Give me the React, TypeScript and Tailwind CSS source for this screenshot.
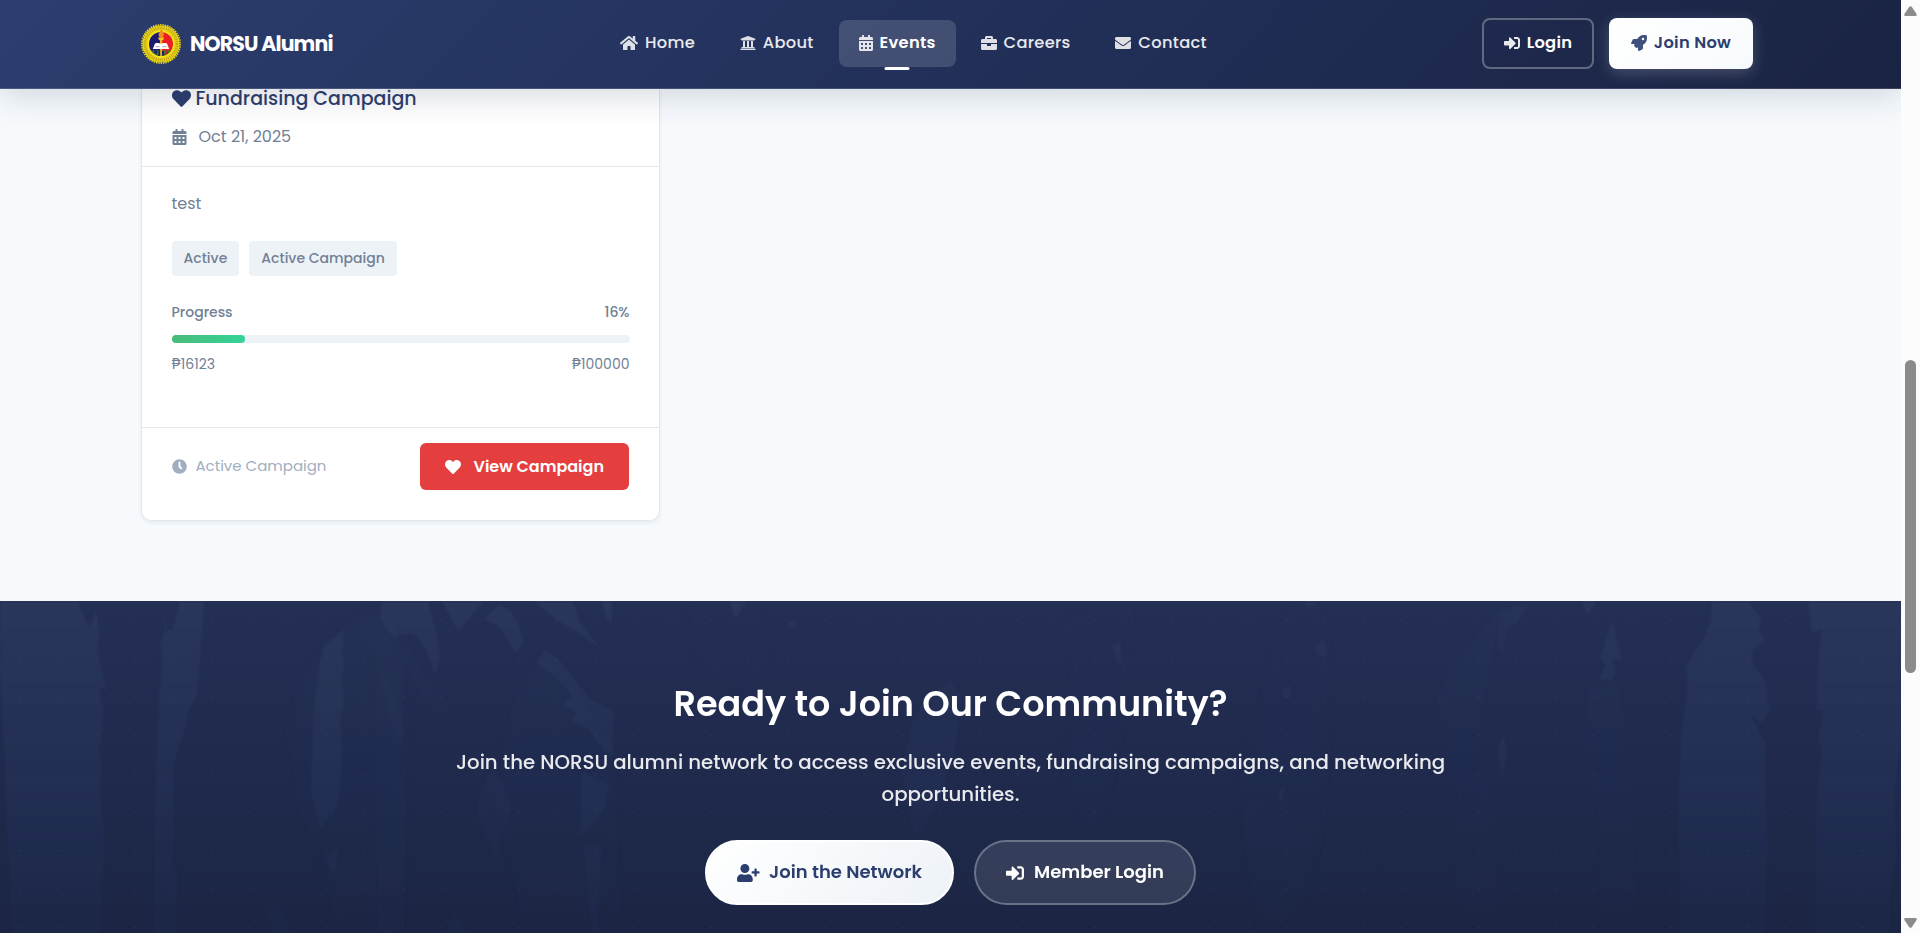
import type { ReactNode } from 'react';
import {
  FaBriefcase,
  FaCalendarAlt,
  FaClock,
  FaEnvelope,
  FaHeart,
  FaHome,
  FaRocket,
  FaSignInAlt,
  FaUniversity,
  FaUserPlus,
} from 'react-icons/fa';

function Seal() {
  return (
    <svg viewBox="0 0 40 40" className="size-10 shrink-0">
      <circle cx="20" cy="20" r="18.6" fill="#ead316" />
      <circle cx="20" cy="20" r="19.2" fill="none" stroke="#f2dc1a" strokeWidth="1.4" strokeDasharray="1.5 0.9" />
      <circle cx="20" cy="20" r="16" fill="none" stroke="#a08c14" strokeWidth="2.8" strokeDasharray="1.1 1" opacity="0.6" />
      <circle cx="20" cy="20" r="13.4" fill="#f8e61c" />
      <path d="M20 8a12 12 0 0 0 0 24z" fill="#1d1a72" />
      <path d="M20 8a12 12 0 0 1 0 24z" fill="#ee1c25" />
      <path d="M10 26.6a12 12 0 0 0 20 0z" fill="#3c7a2a" />
      <path d="M13 27h3v3.2l-3-1.6zM17.5 27h2v5h-2zM21 27h2v4.6h-2z" fill="#20206a" />
      <path d="M24.4 27h2.6v2.4l-2.6 1.6z" fill="#b5262a" />
      <path d="M18.8 14h2.6l-.5 18h-1.6z" fill="#e8b21a" />
      <path d="M20 5.2c2.6 2.6 3.4 4.4 2.6 6.4-.4 1.3-1.3 2-2.5 2.4-1.8-.6-2.7-1.9-2.5-3.7.2-1.5 2-2.6 2.4-5.1z" fill="#f08c1c" />
      <path d="M17 13.6h6.2l-1 2.4h-4.2z" fill="#f6c818" />
      <path d="M14 19.4c2-.8 4.4-.6 6 .3 1.6-.9 4-1.1 6-.3l2.2 5.6H11.8z" fill="#ffffff" />
      <path d="M14.6 22.7h4M21.4 22.7h4" stroke="#8a8a9a" strokeWidth="0.8" />
    </svg>
  );
}

function NavItem({ icon, label, active = false }: { icon: ReactNode; label: string; active?: boolean }) {
  return (
    <a
      className={
        active
          ? 'relative flex h-[47px] items-center gap-[7px] rounded-lg bg-white/15 px-5 text-[16.3px] font-semibold tracking-[0.3px] text-white'
          : 'relative flex h-[47px] items-center gap-[7px] rounded-lg px-5 text-[16.3px] font-medium tracking-[0.3px] text-white/90'
      }
    >
      <span className="text-white/85">{icon}</span>
      <span className="pt-px">{label}</span>
      {active && <span className="absolute top-full left-1/2 h-[3px] w-[25px] -translate-x-1/2 rounded-[2px] bg-white" />}
    </a>
  );
}

function Navbar() {
  return (
    <header className="relative z-10 h-[89px] border-b border-white/15 bg-[linear-gradient(135deg,#2c3e6e_0%,#22305a_50%,#1a2342_100%)] bg-origin-border pr-[148px] pl-[141px] shadow-[0_8px_32px_rgba(26,35,66,0.16)]">
      <div className="grid h-full grid-cols-[459px_1fr_auto] items-center">
        <div className="flex items-center gap-[9px]">
          <Seal />
          <span className="text-[20.5px] font-bold tracking-[-0.85px] text-white">NORSU Alumni</span>
        </div>
        <nav className="mb-[2px] flex items-center gap-[4.8px]">
          <NavItem icon={<FaHome className="h-4 w-[18px]" />} label="Home" />
          <NavItem icon={<FaUniversity className="size-4" />} label="About" />
          <NavItem icon={<FaCalendarAlt className="h-4 w-[14px]" />} label="Events" active />
          <NavItem icon={<FaBriefcase className="size-4" />} label="Careers" />
          <NavItem icon={<FaEnvelope className="size-4" />} label="Contact" />
        </nav>
        <div className="mb-[2px] flex items-center gap-[15px]">
          <a className="flex h-[51px] w-[112px] items-center justify-center gap-[7px] rounded-lg border-2 border-white/30 text-[16.3px] font-semibold tracking-[0.3px] text-white">
            <FaSignInAlt className="size-4 text-white/90" />
            <span className="pt-px">Login</span>
          </a>
          <a className="flex h-[51px] w-[144px] items-center justify-center gap-[7px] rounded-lg bg-[linear-gradient(135deg,#ffffff,#f7fafc)] text-[16.3px] font-semibold tracking-[0.3px] text-[#2c3e6e] shadow-[0_4px_15px_rgba(255,255,255,0.2)]">
            <FaRocket className="size-4 opacity-90" />
            <span className="pt-px">Join Now</span>
          </a>
        </div>
      </div>
    </header>
  );
}

function Tag({ children }: { children: ReactNode }) {
  return (
    <span className="flex h-[35px] items-center rounded bg-[#edf2f7] px-3 text-[14px] font-medium">{children}</span>
  );
}

function CampaignCard() {
  return (
    <article className="h-[432px] w-[519px] rounded-b-[10px] border border-t-0 border-[#e2e8f0] bg-white text-[#718096] shadow-[0_2px_4px_rgba(0,0,0,0.06)]">
      <div className="h-[78px] border-b border-[#e2e8f0] pr-[30px] pl-[29.5px]">
        <h3 className="flex h-[19px] items-center gap-[5px] text-[19px] leading-[19px] font-medium text-[#2c3e6e]">
          <FaHeart className="size-[19px] shrink-0" />
          Fundraising Campaign
        </h3>
        <p className="mt-[17px] flex items-center gap-3 text-[16px] leading-6">
          <FaCalendarAlt className="h-4 w-[15px]" />
          Oct 21, 2025
        </p>
      </div>
      <div className="h-[260px] pt-[25px] pr-[29.5px] pl-[29.5px]">
        <p className="text-[16px] leading-6">test</p>
        <div className="mt-[25px] flex gap-[10px]">
          <Tag>Active</Tag>
          <Tag>Active Campaign</Tag>
        </div>
        <div className="mt-[26px] flex justify-between text-[14px] leading-[21px] font-medium">
          <span>Progress</span>
          <span>16%</span>
        </div>
        <div className="mt-3 h-2 rounded bg-[#edf2f7]">
          <div className="h-full w-[16%] rounded bg-linear-to-r from-[#48bb78] to-[#34d399]" />
        </div>
        <div className="mt-[11px] flex justify-between text-[14px] leading-[21px]">
          <span>₱16123</span>
          <span>₱100000</span>
        </div>
      </div>
      <div className="flex items-start justify-between border-t border-[#e2e8f0] pt-[15px] pr-[30px] pl-[29.5px]">
        <span className="flex h-[46px] items-center gap-[9px] text-[15px] text-[#a0aec0]">
          <FaClock />
          Active Campaign
        </span>
        <a className="flex h-[47px] items-center gap-[12.5px] rounded-md bg-[#e53e3e] px-[25px] text-[16px] font-semibold text-white">
          <FaHeart />
          View Campaign
        </a>
      </div>
    </article>
  );
}

function HeroBackdrop() {
  return (
    <svg viewBox="0 0 1901 332" preserveAspectRatio="none" className="absolute inset-0 size-full">
      <defs>
        <linearGradient id="fade" x1="0" y1="0" x2="0" y2="332" gradientUnits="userSpaceOnUse">
          <stop offset="0" stopColor="#4a5f80" stopOpacity="0.17" />
          <stop offset="0.55" stopColor="#3c5684" stopOpacity="0.13" />
          <stop offset="1" stopColor="#2c4480" stopOpacity="0.07" />
        </linearGradient>
        <linearGradient id="faint" x1="0" y1="0" x2="0" y2="332" gradientUnits="userSpaceOnUse">
          <stop offset="0" stopColor="#4a6080" stopOpacity="0.045" />
          <stop offset="1" stopColor="#40568a" stopOpacity="0.03" />
        </linearGradient>
        <filter id="soft" x="-5%" y="-5%" width="110%" height="110%" colorInterpolationFilters="sRGB">
          <feGaussianBlur stdDeviation="0.9" />
        </filter>
        <filter id="softer" x="-5%" y="-5%" width="110%" height="110%" colorInterpolationFilters="sRGB">
          <feGaussianBlur stdDeviation="4" />
        </filter>
        <pattern id="dots" width="38.4" height="38.4" patternUnits="userSpaceOnUse">
          <circle cx="19.3" cy="19.3" r="0.7" fill="#ffffff" fillOpacity="0.1" />
        </pattern>
      </defs>
      <g fill="url(#fade)" filter="url(#soft)">
        <path d="M0 0H78L86 20 90 28 96 8 99 30 98 50 102 70 107 90 99 86 103 110 101 140 98 146 102 160 100 190 105 245 102 290 100 332H12L8 250 4 150 2 110 0 70Z" />
        <path d="M180 0H204L200 60 197 95 188 110 186 125 178 148 172 170 174 190 173 265 178 275 176 332H154L155 200 157 130 160 112 159 98 162 60 161 40 165 30 164 8 167 30 173 28Z" />
        <path d="M344 28 342 50 345 64 341 78 344 100 340 120 342 150 339 195 335 210 320 228 311 190 313 120 320 60 324 45Z" />
        <path d="M382 0H428L436 30 440 55 435 74 427 50 418 36 410 32 393 36 380 18Z" />
        <path d="M442 0H484L458 30Z" />
        <path d="M484 19 499 3 512 12 519 25 524 42 516 52 506 36 498 24Z" />
        <path d="M534 0H573L580 22 600 47 575 30 555 18Z" />
        <path d="M602 0H612L612 24 607 18Z" />
        <path d="M545 48 560 60 590 98 613 110 613 155 603 148 588 128 571 120 577 112 564 104 572 94 556 76 537 62Z" />
        <path d="M582 170 609 185 605 205 590 230 580 234Z" />
        <path d="M482 190 492 165 502 180 512 208 502 235 495 262 488 238 476 212Z" opacity="0.7" />
        <path d="M583 245H602L597 332H592L586 270Z" />
        <path d="M903 165 913 120 925 98 950 80 961 95 955 150 940 200 916 236 905 200Z" opacity="0.7" />
        <path d="M730 0H747L735 18Z" />
        <path d="M330 252 338 245 336 275 326 262Z" />
        <path d="M268 310 275 300 282 314 292 332H272Z" />
        <path d="M445 332 454 312 466 332Z" />
        <path d="M1712 0H1748L1762 20 1759 28 1765 40 1752 50 1754 65 1766 80 1769 108 1762 122 1749 112 1765 140 1766 200 1768 250 1764 332H1680L1678 200 1682 130 1688 88 1686 66 1695 50 1704 38 1711 20Z" />
        <path d="M1808 0H1901V130L1895 190 1896 260 1890 290V332H1815L1816 200 1822 150 1818 135 1824 110 1817 108 1818 60 1822 28 1812 32Z" />
        <path d="M1612 20 1622 60 1612 58 1616 72 1610 80 1598 78 1606 64 1600 58Z" />
        <path d="M1500 10 1530 0 1520 18 1506 34 1502 55 1497 42Z" opacity="0.5" />
        <path d="M1498 150 1503 134 1507 150 1502 180Z" />
        <path d="M1582 0H1596L1588 14Z" />
      </g>
      <g fill="url(#faint)" filter="url(#softer)">
        <path d="M325 45 300 85 288 130 298 175 300 205 325 260 340 332H400L406 240 404 160 405 110 400 70 390 20 370 10 345 30Z" />
        <path d="M540 55 515 110 506 150 495 200 520 290 525 332H620L615 250 612 150 580 100Z" />
        <path d="M690 0H760L765 70 735 90 700 60Z" opacity="0.6" />
        <path d="M1065 20 1130 0 1128 100 1105 210 1090 232 1064 170 1075 90Z" opacity="0.6" />
        <path d="M1290 0H1318L1328 40 1322 110 1329 150 1320 240 1260 332 1240 180Z" opacity="0.6" />
        <path d="M1240 200 1258 300 1270 332H1300L1320 240Z" opacity="0.6" />
      </g>
      <g fill="url(#faint)" filter="url(#soft)">
        <path d="M362 30 390 20 430 80 448 104 442 112 420 95 405 60 402 140 392 120 378 60Z" />
        <path d="M376 60 392 90 405 130 398 160 406 200 404 332H378Z" />
        <path d="M1500 10 1450 65 1437 100 1446 150 1458 190 1456 290 1462 332H1500L1490 200 1480 120Z" />
        <path d="M1590 85 1583 140 1600 220 1600 332H1640L1630 200 1620 80Z" />
        <path d="M1382 240H1398V265L1390 268 1380 258Z" />
      </g>
      <g fill="#5a7098" opacity="0.08" filter="url(#soft)">
        <path d="M1112 45 1120 40 1123 62 1117 64Z" />
        <path d="M1313 44 1325 38 1328 55 1318 55Z" />
        <path d="M1281 88 1292 84 1290 98 1284 98Z" />
        <path d="M1302 0H1316L1309 10Z" />
        <path d="M788 20h8v6h-8z" />
        <path d="M1278 190 1286 186 1280 205Z" />
      </g>
      <rect width="1901" height="332" fill="url(#dots)" />
    </svg>
  );
}

function JoinSection() {
  return (
    <section className="relative h-[332px] bg-[linear-gradient(180deg,#242f54_0%,#1f2a4d_50%,#1c2543_100%)]">
      <HeroBackdrop />
      <div className="relative flex flex-col items-center pt-[78px] text-center">
        <h2 className="text-[35px] leading-[50px] font-semibold text-white">Ready to Join Our Community?</h2>
        <p className="mt-[17px] w-[1000px] text-[19.76px] leading-8 font-medium text-white/90">
          Join the NORSU alumni network to access exclusive events, fundraising campaigns, and networking opportunities.
        </p>
        <div className="mt-[30px] flex gap-5">
          <a className="flex h-[65px] w-[249px] items-center justify-center gap-[9.5px] rounded-full border-2 border-white bg-[linear-gradient(135deg,#ffffff,#edf2f7)] text-[18px] font-semibold text-[#2c3e6e]">
            <FaUserPlus className="h-[18px] w-[22.5px]" />
            <span className="pb-[2px]">Join the Network</span>
          </a>
          <a className="flex h-[65px] w-[222px] items-center justify-center gap-[10px] rounded-full border-2 border-white/35 bg-white/10 bg-clip-padding text-[18px] font-semibold text-white">
            <FaSignInAlt />
            <span className="pb-[2px]">Member Login</span>
          </a>
        </div>
      </div>
    </section>
  );
}

function Scrollbar() {
  return (
    <div className="flex w-[19px] flex-col items-center bg-[#fcfcfc]">
      <svg viewBox="0 0 13 10" className="mt-[6px] h-[10px] w-[13px]" fill="#8b8b8b">
        <path d="M5.3.8Q6.5-.5 7.7.8L12.6 8Q13.2 10 11.5 10H1.5Q-.2 10 .4 8Z" />
      </svg>
      <div className="mt-[344px] h-[313px] w-[11px] rounded-full bg-[#8b8b8b]" />
      <svg viewBox="0 0 13 10" className="mt-auto mb-[5px] h-[10px] w-[13px]" fill="#8b8b8b">
        <path d="M5.3 9.2Q6.5 10.5 7.7 9.2L12.6 2Q13.2 0 11.5 0H1.5Q-.2 0 .4 2Z" />
      </svg>
    </div>
  );
}

export default function App() {
  return (
    <div className="flex h-[933px] w-[1920px] overflow-hidden bg-[#f7fafc] font-['Poppins','Inter',sans-serif]">
      <div className="w-[1901px] overflow-hidden">
        <Navbar />
        <main>
          <div className="h-[512px] bg-[#f6fafd] pl-[141px]">
            <CampaignCard />
          </div>
          <JoinSection />
        </main>
      </div>
      <Scrollbar />
    </div>
  );
}
